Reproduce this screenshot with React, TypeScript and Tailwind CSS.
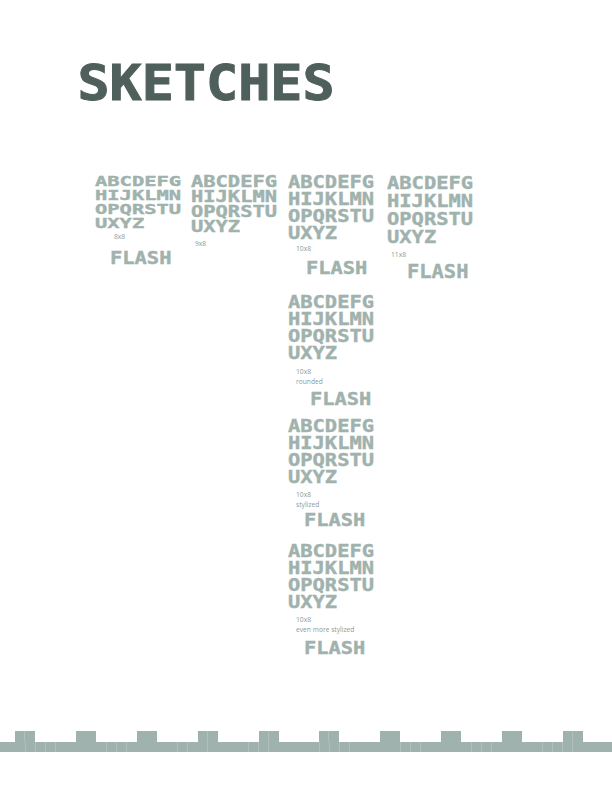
const LINES = ["ABCDEFG", "HIJKLMN", "OPQRSTU", "UXYZ"];

const FONT = "font-['DejaVu_Sans_Mono',monospace] font-bold text-[#a0b2ad] [-webkit-text-stroke:0.4px_#a0b2ad] whitespace-pre origin-left";

type SpecimenProps = {
  type: string;
  labels: string[];
  labelClass: string;
  flashClass: string;
};

function Specimen({ type, labels, labelClass, flashClass }: SpecimenProps) {
  return (
    <div className="flex flex-col items-start">
      <div className={`${FONT} ${type}`}>
        {LINES.map((l) => (
          <div key={l}>{l}</div>
        ))}
      </div>
      <div className={`font-['Open_Sans',sans-serif] text-[6.7px] leading-[10px] text-[#8c9c98] ${labelClass}`}>
        {labels.map((l) => (
          <div key={l}>{l}</div>
        ))}
      </div>
      <div className={`${FONT} ${flashClass}`}>FLASH</div>
    </div>
  );
}

const TYPE_10 = "text-[17px] leading-[17px] scale-x-[1.2]";
const FLASH_10 = "text-[18px] leading-[18px] scale-x-[1.13]";

const TABS = [
  { id: 15, split: true },
  { id: 76, split: false },
  { id: 137, split: false },
  { id: 197, split: true },
  { id: 258, split: true },
  { id: 319, split: true },
  { id: 380, split: false },
  { id: 441, split: false },
  { id: 502, split: false },
  { id: 563, split: true },
];

// x of each thin seam in the strip
const SEAMS = [25, 35, 45, 55, 106, 116, 126, 177, 187, 207, 248, 258, 268, 319, 329, 339, 349, 400, 410, 420, 471, 481, 491, 542, 552, 562, 572];

export default function App() {
  return (
    <div className="relative w-[612px] h-[792px] bg-white overflow-hidden">
      <h1 className="pl-[71px] pt-[59px] font-['DejaVu_Sans_Mono',monospace] font-bold text-[49px] leading-[50px] text-[#4f5f5b] [-webkit-text-stroke:1px_#4f5f5b] origin-left scale-x-[1.09]">
        SKETCHES
      </h1>

      <div className="flex items-start pl-[95px] pt-[65px]">
        <div className="w-[96px]">
          <Specimen type="text-[14px] leading-[14px] scale-x-[1.46]" labels={["8x8"]} labelClass="ml-[19px] mt-[2px]" flashClass="ml-[15px] mt-[7px] text-[17px] leading-[18px] scale-x-[1.2]" />
        </div>
        <div className="w-[97px] pt-px">
          <Specimen type="text-[15px] leading-[15px] scale-x-[1.36]" labels={["9x8"]} labelClass="ml-[4px] mt-[4px]" flashClass="hidden" />
        </div>
        <div className="w-[99px] flex flex-col">
          <Specimen type={TYPE_10} labels={["10x8"]} labelClass="ml-2 mt-[2px]" flashClass={`ml-[18px] mt-[5px] ${FLASH_10}`} />
          <div className="mt-[17px]">
            <Specimen type={TYPE_10} labels={["10x8", "rounded"]} labelClass="ml-2 mt-[5px]" flashClass={`ml-[22px] mt-[3px] ${FLASH_10}`} />
          </div>
          <div className="mt-[10px]">
            <Specimen type={TYPE_10} labels={["10x8", "stylized"]} labelClass="ml-2 mt-[4px]" flashClass={`ml-[16px] mt-[1px] ${FLASH_10}`} />
          </div>
          <div className="mt-[14px]">
            <Specimen type={TYPE_10} labels={["10x8", "even more stylized"]} labelClass="ml-2 mt-[4px]" flashClass={`ml-[16px] mt-[4px] ${FLASH_10}`} />
          </div>
        </div>
        <div>
          <Specimen type="text-[18px] leading-[18px] scale-x-[1.135]" labels={["11x8"]} labelClass="ml-[4px] mt-[4px]" flashClass="ml-[20px] mt-0 text-[20px] leading-[22px] scale-x-[1.02]" />
        </div>
      </div>

      <div className="absolute left-0 right-0 top-[731px]">
        <div className="flex gap-[40.9px] pl-[15px]">
          {TABS.map((t) => (
            <div key={t.id} className="w-5 h-[11px] bg-[#a0b2ad]">
              {t.split && <div className="w-[10px] h-full border-r border-[#b0c0bc]" />}
            </div>
          ))}
        </div>
        <div className="flex h-[10px] bg-[#a0b2ad]">
          {SEAMS.map((x, i) => (
            <div key={x} className="shrink-0 border-r border-[#b0c0bc]" style={{ width: x - (i ? SEAMS[i - 1] : -1) }} />
          ))}
        </div>
      </div>
    </div>
  );
}
